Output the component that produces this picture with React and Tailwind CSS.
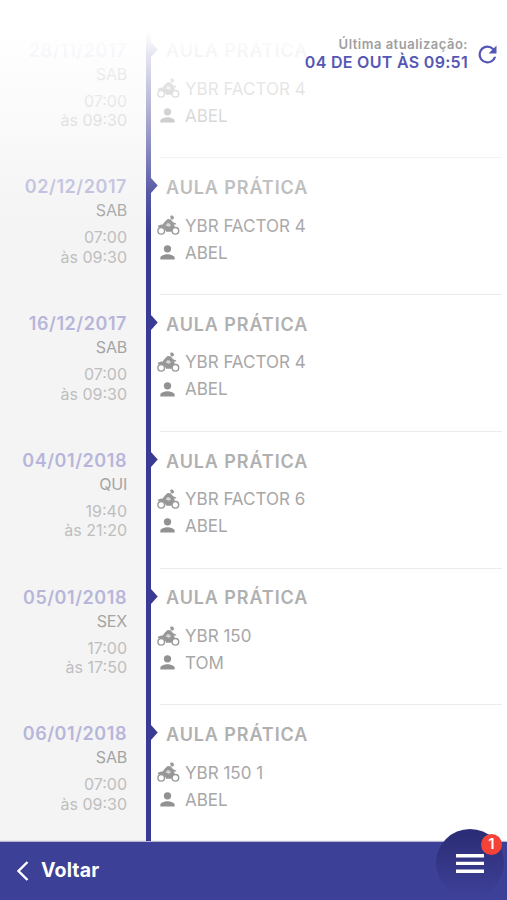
const lessons = [
  { date: '28/11/2017', day: 'SAB', start: '07:00', end: 'às 09:30', vehicle: 'YBR FACTOR 4', teacher: 'ABEL' },
  { date: '02/12/2017', day: 'SAB', start: '07:00', end: 'às 09:30', vehicle: 'YBR FACTOR 4', teacher: 'ABEL' },
  { date: '16/12/2017', day: 'SAB', start: '07:00', end: 'às 09:30', vehicle: 'YBR FACTOR 4', teacher: 'ABEL' },
  { date: '04/01/2018', day: 'QUI', start: '19:40', end: 'às 21:20', vehicle: 'YBR FACTOR 6', teacher: 'ABEL' },
  { date: '05/01/2018', day: 'SEX', start: '17:00', end: 'às 17:50', vehicle: 'YBR 150', teacher: 'TOM' },
  { date: '06/01/2018', day: 'SAB', start: '07:00', end: 'às 09:30', vehicle: 'YBR 150 1', teacher: 'ABEL' },
];

function MotorcycleIcon() {
  return (
    <svg width="23" height="20" viewBox="0 0 23 20" className="relative -top-px shrink-0">
      <path
        fill="#979797"
        d="M13.2.9 15 .3l2.2 1.9-1 2.2-1.7.2-.9-1.2ZM10.6 4.1l2.9.1 2.6 3 3.2 1.2-.4 1-2.2.2 1.3 1.6-2 1.8-1.4 3.7H9.2l-1.6-3-2.2-1.6H1.6L.4 10.9l3-1.1 2.2-.2 2.4-3Z"
      />
      <path d="m8.6 10.2 2.1-2.2 2.3.8.9 2-2.4 1Z" fill="#d6d6d6" />
      <g fill="#fff" stroke="#979797" strokeWidth="1.4">
        <circle cx="4.2" cy="15.8" r="3.3" />
        <circle cx="18.4" cy="15.8" r="3.3" />
      </g>
    </svg>
  );
}

function PersonIcon() {
  return (
    <svg width="21" height="21" viewBox="0 0 24 24" fill="#929292" className="relative -top-px shrink-0">
      <path d="M12 12a4.2 4.2 0 1 0 0-8.4 4.2 4.2 0 0 0 0 8.4Zm0 2c-2.8 0-8.2 1.4-8.2 4.2V20h16.4v-1.8c0-2.8-5.4-4.2-8.2-4.2Z" />
    </svg>
  );
}

function Lesson({ lesson }) {
  return (
    <li className="flex h-[136.8px]">
      <div className="flex w-[145.5px] shrink-0 flex-col items-end bg-[#f4f4f4] pt-[18px] pr-[18.5px]">
        <span className="text-[18px] leading-6 font-semibold tracking-[0.55px] text-[#b7b6da]">{lesson.date}</span>
        <span className="-mt-px text-[16px] leading-6 tracking-[-0.2px] text-[#a4a4a4]">{lesson.day}</span>
        <span className="mt-[6px] text-[16px] leading-[19.5px] text-[#bebebe]">{lesson.start}</span>
        <span className="text-[16px] leading-[19.5px] text-[#bebebe]">{lesson.end}</span>
      </div>
      <div className="relative w-[5.5px] shrink-0 bg-[#393a94]">
        <svg width="7" height="15" viewBox="0 0 7 15" className="absolute top-[21px] left-[5px]">
          <path d="M0 0 6.7 7.5 0 15Z" fill="#393a94" />
        </svg>
      </div>
      <div className="mr-[5px] ml-[9px] flex-1 border-t border-[#ebebeb]">
        <h2 className="mt-[17.8px] pl-[6px] text-[18px] leading-6 font-semibold tracking-[0.9px] text-[#b0b0b0]">
          AULA PRÁTICA
        </h2>
        <div className="mt-[12.7px] -ml-[3px] flex h-[27px] items-center">
          <MotorcycleIcon />
          <span className="ml-[5px] text-[17px] text-[#a7a7a7]">{lesson.vehicle}</span>
        </div>
        <div className="-ml-[3px] flex h-[27px] items-center">
          <PersonIcon />
          <span className="ml-[7px] text-[17px] text-[#a7a7a7]">{lesson.teacher}</span>
        </div>
      </div>
    </li>
  );
}

export default function App() {
  return (
    <div className="relative flex h-[900px] w-[507px] flex-col overflow-hidden bg-white font-['Inter',sans-serif]">
      <main className="h-[841.5px] shrink-0 overflow-hidden pt-[20.5px]">
        <ul>
          {lessons.map((lesson) => (
            <Lesson key={lesson.date} lesson={lesson} />
          ))}
        </ul>
      </main>

      <header className="absolute inset-x-0 top-0 flex h-[240px] items-start justify-end bg-[linear-gradient(to_bottom,#fff_32px,rgba(255,255,255,0.87)_55px,rgba(255,255,255,0.63)_105px,rgba(255,255,255,0.4)_150px,rgba(255,255,255,0.15)_195px,rgba(255,255,255,0)_235px)] pt-[36px] pr-[6px]">
        <div className="flex flex-col items-end">
          <span className="text-[13px] leading-[17px] font-semibold tracking-[0.5px] text-[#a0a0a0]">
            Última atualização:
          </span>
          <span className="text-[16px] leading-[18px] font-semibold tracking-[0.3px] text-[#5557b5]">
            04 DE OUT ÀS 09:51
          </span>
        </div>
        <svg width="27" height="27" viewBox="0 0 24 24" fill="#5557b5" className="mt-[5px] ml-[6px]">
          <path d="M17.65 6.35A7.96 7.96 0 0 0 12 4a8 8 0 1 0 7.73 10h-2.08A6 6 0 1 1 12 6c1.66 0 3.14.69 4.22 1.78L13 11h7V4l-2.35 2.35Z" />
        </svg>
      </header>

      <footer className="relative flex flex-1 items-center bg-[#3d4097] shadow-[0_-1px_1px_rgba(45,45,130,0.35)]">
        <button className="flex items-center pl-[16px] text-white">
          <svg width="13" height="20" viewBox="0 0 13 20" fill="none" stroke="white" strokeWidth="2.4">
            <path d="M11.5 1 2.5 10l9 9" />
          </svg>
          <span className="ml-[12px] text-[19.5px] font-bold tracking-[0.15px]">Voltar</span>
        </button>
        <button className="absolute -top-[12.5px] right-[3px] flex h-[68px] w-[68px] items-center justify-center rounded-full bg-[linear-gradient(to_bottom,#2b2c75,#3d4097)]">
          <svg width="28" height="20" viewBox="0 0 28 20" fill="white" className="mt-px">
            <path d="M0 0h28v3.4H0ZM0 7.7h28v3.4H0ZM0 15.6h28V19H0Z" />
          </svg>
          <span className="absolute top-[4.5px] right-[2px] flex h-[21px] w-[21px] items-center justify-center rounded-full bg-[#f44336] text-[15px] font-semibold text-white">
            1
          </span>
        </button>
      </footer>
    </div>
  );
}
